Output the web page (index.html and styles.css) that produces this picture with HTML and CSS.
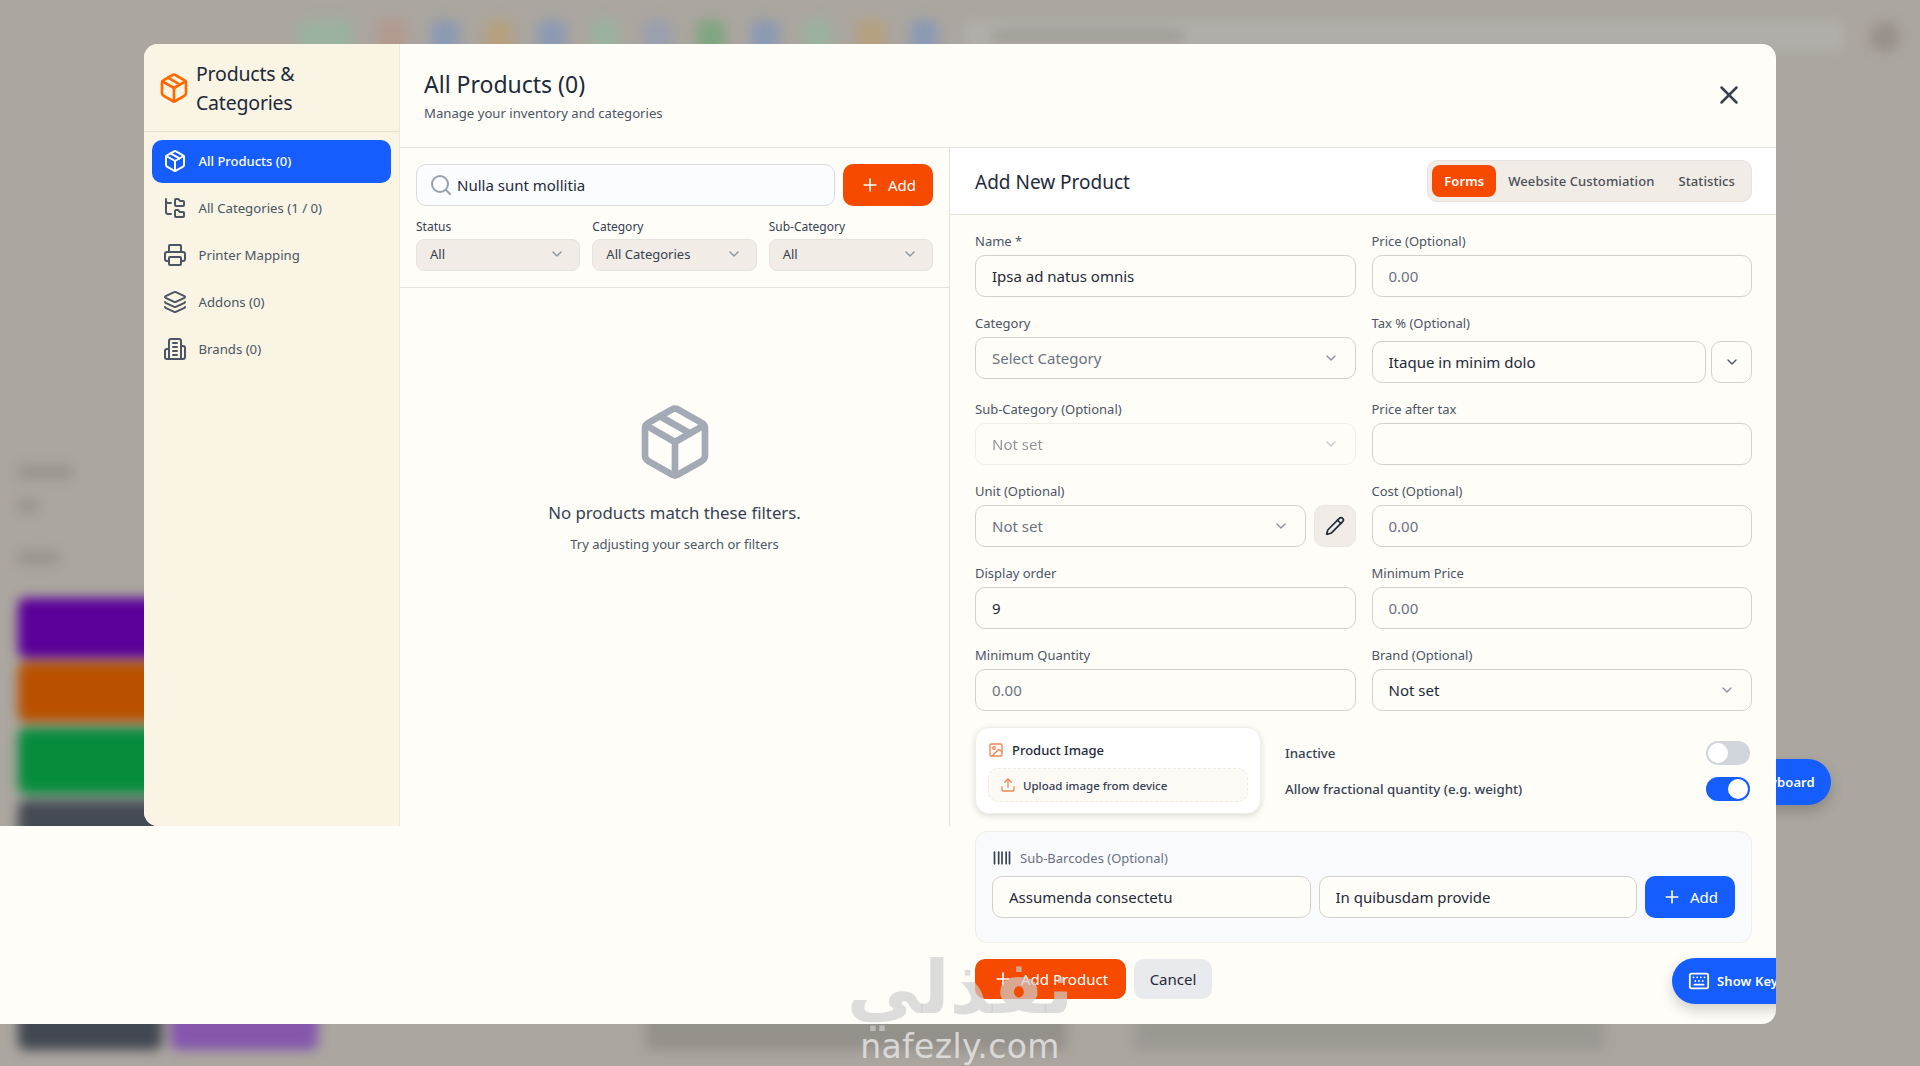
FILE: index.html
```html
<!DOCTYPE html>
<html lang="en">

<head>
    <meta charset="UTF-8">
    <meta name="viewport" content="width=device-width, initial-scale=1.0">
    <title>Products &amp; Categories</title>
    <link rel="stylesheet" href="styles.css">
</head>

<body>
    <svg class="sprite" aria-hidden="true">
        <symbol id="i-package" viewBox="0 0 24 24"><path d="M11 21.73a2 2 0 0 0 2 0l7-4a2 2 0 0 0 1-1.73V8a2 2 0 0 0-1-1.73l-7-4a2 2 0 0 0-2 0l-7 4A2 2 0 0 0 3 8v8a2 2 0 0 0 1 1.73z"/><path d="M12 22V12"/><path d="m3.3 7 8.7 5 8.7-5"/><path d="m7.5 4.27 9 5.15"/></symbol>
        <symbol id="i-tree" viewBox="0 0 24 24"><path d="M20 10a1 1 0 0 0 1-1V6a1 1 0 0 0-1-1h-2.5a1 1 0 0 1-.8-.4l-.9-1.2A1 1 0 0 0 15 3h-2a1 1 0 0 0-1 1v5a1 1 0 0 0 1 1Z"/><path d="M20 21a1 1 0 0 0 1-1v-3a1 1 0 0 0-1-1h-2.9a1 1 0 0 1-.88-.55l-.42-.85a1 1 0 0 0-.92-.6H13a1 1 0 0 0-1 1v5a1 1 0 0 0 1 1Z"/><path d="M3 5a2 2 0 0 0 2 2h3"/><path d="M3 3v13a2 2 0 0 0 2 2h3"/></symbol>
        <symbol id="i-printer" viewBox="0 0 24 24"><path d="M6 18H4a2 2 0 0 1-2-2v-5a2 2 0 0 1 2-2h16a2 2 0 0 1 2 2v5a2 2 0 0 1-2 2h-2"/><path d="M6 9V3a1 1 0 0 1 1-1h10a1 1 0 0 1 1 1v6"/><rect x="6" y="14" width="12" height="8" rx="1"/></symbol>
        <symbol id="i-layers" viewBox="0 0 24 24"><path d="M12.83 2.18a2 2 0 0 0-1.66 0L2.6 6.08a1 1 0 0 0 0 1.83l8.58 3.91a2 2 0 0 0 1.66 0l8.58-3.9a1 1 0 0 0 0-1.83z"/><path d="M2 12a1 1 0 0 0 .58.91l8.6 3.91a2 2 0 0 0 1.65 0l8.58-3.9A1 1 0 0 0 22 12"/><path d="M2 17a1 1 0 0 0 .58.91l8.6 3.91a2 2 0 0 0 1.65 0l8.58-3.9A1 1 0 0 0 22 17"/></symbol>
        <symbol id="i-building" viewBox="0 0 24 24"><path d="M6 22V4a2 2 0 0 1 2-2h8a2 2 0 0 1 2 2v18Z"/><path d="M6 12H4a2 2 0 0 0-2 2v6a2 2 0 0 0 2 2h2"/><path d="M18 9h2a2 2 0 0 1 2 2v9a2 2 0 0 1-2 2h-2"/><path d="M10 6h4"/><path d="M10 10h4"/><path d="M10 14h4"/><path d="M10 18h4"/></symbol>
        <symbol id="i-search" viewBox="0 0 24 24"><circle cx="11" cy="11" r="8"/><path d="m21 21-4.3-4.3"/></symbol>
        <symbol id="i-plus" viewBox="0 0 24 24"><path d="M5 12h14"/><path d="M12 5v14"/></symbol>
        <symbol id="i-x" viewBox="0 0 24 24"><path d="M18 6 6 18"/><path d="m6 6 12 12"/></symbol>
        <symbol id="i-chevron" viewBox="0 0 24 24"><path d="m6 9 6 6 6-6"/></symbol>
        <symbol id="i-pencil" viewBox="0 0 24 24"><path d="M21.174 6.812a1 1 0 0 0-3.986-3.987L3.842 16.174a2 2 0 0 0-.5.83l-1.321 4.352a.5.5 0 0 0 .623.622l4.353-1.32a2 2 0 0 0 .83-.497z"/><path d="m15 5 4 4"/></symbol>
        <symbol id="i-image" viewBox="0 0 24 24"><rect x="3" y="3" width="18" height="18" rx="2"/><circle cx="9" cy="9" r="2"/><path d="m21 15-3.086-3.086a2 2 0 0 0-2.828 0L6 21"/></symbol>
        <symbol id="i-upload" viewBox="0 0 24 24"><path d="M12 3v12"/><path d="m17 8-5-5-5 5"/><path d="M21 15v4a2 2 0 0 1-2 2H5a2 2 0 0 1-2-2v-4"/></symbol>
        <symbol id="i-barcode" viewBox="0 0 24 24"><path d="M3 5v14"/><path d="M8 5v14"/><path d="M12 5v14"/><path d="M17 5v14"/><path d="M21 5v14"/></symbol>
        <symbol id="i-keyboard" viewBox="0 0 24 24"><path d="M10 8h.01"/><path d="M12 12h.01"/><path d="M14 8h.01"/><path d="M16 12h.01"/><path d="M18 8h.01"/><path d="M6 8h.01"/><path d="M7 16h10"/><path d="M8 12h.01"/><rect width="20" height="16" x="2" y="4" rx="2"/></symbol>
    </svg>

    <!-- blurred page behind the dialog -->
    <div class="backdrop">
        <div class="bg_topbar">
            <span class="chip chip_green wide"></span>
            <span class="chip chip_rose"></span>
            <span class="chip chip_blue"></span>
            <span class="chip chip_amber"></span>
            <span class="chip chip_blue"></span>
            <span class="chip chip_green"></span>
            <span class="chip chip_slate"></span>
            <span class="chip chip_leaf"></span>
            <span class="chip chip_blue"></span>
            <span class="chip chip_green"></span>
            <span class="chip chip_amber"></span>
            <span class="chip chip_blue"></span>
            <span class="bg_search"><span class="bg_search_text"></span></span>
            <span class="bg_avatar"></span>
        </div>
        <div class="bg_side">
            <span class="bg_line w50"></span>
            <span class="bg_line w20"></span>
            <span class="bg_line w40"></span>
            <span class="bg_block purple"></span>
            <span class="bg_block orange"></span>
            <span class="bg_block green"></span>
            <span class="bg_block dark"></span>
        </div>
        <div class="bg_bottom">
            <span class="bg_foot dark_foot"></span>
            <span class="bg_foot violet_foot"></span>
            <span class="bg_foot mid_foot"></span>
            <span class="bg_foot far_foot"></span>
        </div>
    </div>

    <button class="kbd_btn back_kbd">
        <svg class="icon i22"><use href="#i-keyboard"/></svg>
        Show Keyboard
    </button>

    <!-- lower part of the dialog, it runs out to the left edge -->
    <div class="spill">
        <button class="kbd_btn front_kbd">
            <svg class="icon i22"><use href="#i-keyboard"/></svg>
            Show Keyboard
        </button>
    </div>

    <div class="modal">
        <aside class="sidebar">
            <div class="side_head">
                <svg class="icon i32 orange_icon"><use href="#i-package"/></svg>
                <h2>Products &amp; Categories</h2>
            </div>
            <nav class="side_nav">
                <a class="nav_item active"><svg class="icon i24"><use href="#i-package"/></svg>All Products (0)</a>
                <a class="nav_item"><svg class="icon i24"><use href="#i-tree"/></svg>All Categories (1 / 0)</a>
                <a class="nav_item"><svg class="icon i24"><use href="#i-printer"/></svg>Printer Mapping</a>
                <a class="nav_item"><svg class="icon i24"><use href="#i-layers"/></svg>Addons (0)</a>
                <a class="nav_item"><svg class="icon i24"><use href="#i-building"/></svg>Brands (0)</a>
            </nav>
        </aside>

        <main class="main">
            <header class="main_head">
                <div>
                    <h1>All Products (0)</h1>
                    <p>Manage your inventory and categories</p>
                </div>
                <svg class="icon i30 close"><use href="#i-x"/></svg>
            </header>

            <div class="main_body">
                <section class="list_pane">
                    <div class="list_tools">
                        <div class="search_row">
                            <div class="search">
                                <svg class="icon i24"><use href="#i-search"/></svg>
                                <span>Nulla sunt mollitia</span>
                            </div>
                            <button class="btn btn_orange add_small"><svg class="icon i20"><use href="#i-plus"/></svg>Add</button>
                        </div>
                        <div class="filters">
                            <div class="filter">
                                <label>Status</label>
                                <div class="filter_select"><span>All</span><svg class="icon i16"><use href="#i-chevron"/></svg></div>
                            </div>
                            <div class="filter">
                                <label>Category</label>
                                <div class="filter_select"><span>All Categories</span><svg class="icon i16"><use href="#i-chevron"/></svg></div>
                            </div>
                            <div class="filter">
                                <label>Sub-Category</label>
                                <div class="filter_select"><span>All</span><svg class="icon i16"><use href="#i-chevron"/></svg></div>
                            </div>
                        </div>
                    </div>
                    <div class="empty">
                        <svg class="icon empty_icon"><use href="#i-package"/></svg>
                        <p class="empty_title">No products match these filters.</p>
                        <p class="empty_sub">Try adjusting your search or filters</p>
                    </div>
                </section>

                <section class="form_pane">
                    <div class="form_head">
                        <h3>Add New Product</h3>
                        <div class="tabs">
                            <span class="tab active">Forms</span>
                            <span class="tab">Weebsite Customiation</span>
                            <span class="tab">Statistics</span>
                        </div>
                    </div>

                    <form class="form">
                        <div class="form_grid">
                            <div class="field">
                                <label>Name *</label>
                                <input class="input" value="Ipsa ad natus omnis">
                            </div>
                            <div class="field">
                                <label>Price (Optional)</label>
                                <input class="input" placeholder="0.00">
                            </div>
                            <div class="field">
                                <label>Category</label>
                                <div class="input select placeholder"><span>Select Category</span><svg class="icon i16"><use href="#i-chevron"/></svg></div>
                            </div>
                            <div class="field">
                                <label>Tax % (Optional)</label>
                                <div class="input_row tax_row">
                                    <input class="input" value="Itaque in minim dolo">
                                    <button type="button" class="side_btn"><svg class="icon i16"><use href="#i-chevron"/></svg></button>
                                </div>
                            </div>
                            <div class="field">
                                <label>Sub-Category (Optional)</label>
                                <div class="input select disabled"><span>Not set</span><svg class="icon i16"><use href="#i-chevron"/></svg></div>
                            </div>
                            <div class="field">
                                <label>Price after tax</label>
                                <input class="input">
                            </div>
                            <div class="field">
                                <label>Unit (Optional)</label>
                                <div class="input_row">
                                    <div class="input select placeholder"><span>Not set</span><svg class="icon i16"><use href="#i-chevron"/></svg></div>
                                    <button type="button" class="side_btn edit_btn"><svg class="icon i20"><use href="#i-pencil"/></svg></button>
                                </div>
                            </div>
                            <div class="field">
                                <label>Cost (Optional)</label>
                                <input class="input" placeholder="0.00">
                            </div>
                            <div class="field">
                                <label>Display order</label>
                                <input class="input" value="9">
                            </div>
                            <div class="field">
                                <label>Minimum Price</label>
                                <input class="input" placeholder="0.00">
                            </div>
                            <div class="field">
                                <label>Minimum Quantity</label>
                                <input class="input" placeholder="0.00">
                            </div>
                            <div class="field">
                                <label>Brand (Optional)</label>
                                <div class="input select"><span>Not set</span><svg class="icon i16"><use href="#i-chevron"/></svg></div>
                            </div>
                        </div>

                        <div class="media_row">
                            <div class="image_card">
                                <div class="image_title"><svg class="icon i16 orange_soft"><use href="#i-image"/></svg>Product Image</div>
                                <div class="upload"><svg class="icon i16 orange_soft"><use href="#i-upload"/></svg>Upload image from device</div>
                            </div>
                            <div class="switches">
                                <div class="switch_row">
                                    <span>Inactive</span>
                                    <span class="switch"></span>
                                </div>
                                <div class="switch_row">
                                    <span>Allow fractional quantity (e.g. weight)</span>
                                    <span class="switch on"></span>
                                </div>
                            </div>
                        </div>

                        <div class="barcodes">
                            <div class="barcodes_title"><svg class="icon i20 barcode_icon"><use href="#i-barcode"/></svg>Sub-Barcodes (Optional)</div>
                            <div class="barcodes_row">
                                <input class="input" value="Assumenda consectetu">
                                <input class="input" value="In quibusdam provide">
                                <button type="button" class="btn btn_blue add_small"><svg class="icon i20"><use href="#i-plus"/></svg>Add</button>
                            </div>
                        </div>

                        <div class="form_foot">
                            <button type="button" class="btn btn_orange add_product"><svg class="icon i20"><use href="#i-plus"/></svg>Add Product</button>
                            <button type="button" class="btn btn_gray">Cancel</button>
                        </div>
                    </form>
                </section>
            </div>
        </main>
    </div>

    <div class="watermark">
        <span class="mark_ar" lang="ar" dir="rtl">نفذلي</span>
        <span class="mark_en">nafezly.com</span>
    </div>
</body>

</html>
```

FILE: styles.css
```css
* {
    box-sizing: border-box;
}

html,
body {
    margin: 0;
    height: 100%;
}

body {
    position: relative;
    width: 1920px;
    height: 1066px;
    overflow: hidden;
    background: #aba69f;
    color: #1e2939;
    font-family: "Noto Sans", "Liberation Sans", sans-serif;
}

h1,
h2,
h3,
p {
    margin: 0;
    font-weight: 400;
}

button,
input {
    font: inherit;
}

.sprite {
    display: none;
}

.icon {
    flex: none;
    fill: none;
    stroke: currentColor;
    stroke-width: 2;
    stroke-linecap: round;
    stroke-linejoin: round;
}

.i16 {
    width: 16px;
    height: 16px;
}

.i20 {
    width: 20px;
    height: 20px;
}

.i22 {
    width: 22px;
    height: 22px;
}

.i24 {
    width: 24px;
    height: 24px;
}

.i30 {
    width: 30px;
    height: 30px;
}

.i32 {
    width: 32px;
    height: 32px;
}

/* blurred page */
.backdrop {
    position: absolute;
    inset: 0;
    display: flex;
    flex-direction: column;
    filter: blur(6px);
}

.bg_topbar {
    display: flex;
    gap: 25.2px;
    height: 60px;
    padding: 20px 20px 0 299px;
}

.chip {
    width: 28px;
    height: 40px;
    border-radius: 6px;
}

.chip.wide {
    width: 54px;
}

.chip_green {
    background: #9ab29f;
}

.chip_rose {
    background: #b3998f;
}

.chip_blue {
    background: #8c9ab3;
}

.chip_amber {
    background: #b5a07e;
}

.chip_slate {
    background: #9a9fae;
}

.chip_leaf {
    background: #80a581;
}

.bg_search {
    flex: 1;
    height: 32px;
    padding: 10px 30px;
    background: #b0aea8;
    border-radius: 8px;
}

.bg_search_text {
    display: block;
    width: 190px;
    height: 12px;
    background: #9f9b95;
}

.bg_avatar {
    width: 30px;
    height: 30px;
    margin-top: 2px;
    background: #96918a;
    border-radius: 50%;
}

.bg_side {
    display: flex;
    flex-direction: column;
    width: 160px;
    padding: 406px 0 0 18px;
}

.bg_line {
    height: 12px;
    background: #96928b;
}

.w50 {
    width: 54px;
    margin-bottom: 22px;
}

.w20 {
    width: 20px;
    margin-bottom: 40px;
}

.w40 {
    width: 40px;
}

.bg_block {
    width: 200px;
    border-radius: 8px;
}

.bg_block.purple {
    height: 60px;
    margin-top: 34px;
    background: #5b0099;
}

.bg_block.orange {
    height: 60px;
    margin-top: 4px;
    background: #b85000;
}

.bg_block.green {
    height: 66px;
    margin-top: 6px;
    background: #058c3a;
}

.bg_block.dark {
    height: 60px;
    margin-top: 6px;
    background: #454b55;
}

.bg_bottom {
    display: flex;
    gap: 8px;
    margin-top: auto;
    padding: 0 0 16px 18px;
}

.bg_foot {
    height: 70px;
}

.dark_foot {
    width: 144px;
    background: #424852;
    border-radius: 8px;
}

.violet_foot {
    width: 148px;
    background: #8457ad;
    border-radius: 8px;
}

.mid_foot {
    width: 420px;
    margin-left: 320px;
    background: #94908a;
}

.far_foot {
    width: 470px;
    margin-left: 60px;
    background: #9b9892;
}

/* floating keyboard button */
.kbd_btn {
    position: absolute;
    display: flex;
    align-items: center;
    gap: 7px;
    width: 160px;
    height: 46px;
    padding: 0 0 0 16px;
    border: 0;
    border-radius: 23px;
    background: #155dfc;
    color: #fff;
    font-size: 13px;
    font-weight: 600;
    letter-spacing: .1px;
    white-space: nowrap;
    box-shadow: 0 6px 14px rgba(0, 0, 0, .18);
}

.back_kbd {
    left: 1671px;
    top: 759px;
}

.front_kbd {
    left: 1672px;
    top: 132px;
}

.spill {
    position: absolute;
    left: 0;
    top: 826px;
    width: 1776px;
    height: 198px;
    overflow: hidden;
    background: #fffdf8;
    border-radius: 0 0 14px 0;
}

/* dialog */
.modal {
    position: absolute;
    left: 144px;
    top: 44px;
    display: flex;
    width: 1632px;
    height: 782px;
    background: #fffdf8;
    border-radius: 14px 14px 0 14px;
}

.sidebar {
    width: 256px;
    flex: none;
    background: #f9f4e4;
    border-right: 1px solid #efe9da;
    border-radius: 14px 0 0 14px;
}

.side_head {
    display: flex;
    align-items: center;
    gap: 6px;
    height: 88px;
    padding: 0 16px 0 14px;
    border-bottom: 1px solid #e6e0d1;
}

.side_head h2 {
    font-size: 19.5px;
    line-height: 29px;
    letter-spacing: -.2px;
}

.orange_icon {
    color: #ff6900;
}

.side_nav {
    display: flex;
    flex-direction: column;
    gap: 4px;
    padding: 8px;
}

.nav_item {
    display: flex;
    align-items: center;
    gap: 11.5px;
    height: 42.8px;
    padding: 0 11px;
    border-radius: 10px;
    color: #4a5565;
    font-size: 13.2px;
}

.nav_item.active {
    background: #155dfc;
    color: #fff;
    font-size: 13px;
    font-weight: 500;
}

.main {
    display: flex;
    flex: 1;
    flex-direction: column;
    min-width: 0;
}

.main_head {
    display: flex;
    align-items: center;
    justify-content: space-between;
    flex: none;
    height: 104px;
    padding: 0 32px 0 24px;
    border-bottom: 1px solid #e5e3df;
}

.main_head h1 {
    font-size: 23px;
    line-height: 32px;
}

.main_head p {
    margin-top: 3px;
    color: #4a5565;
    font-size: 13.15px;
    line-height: 20px;
}

.close {
    margin-bottom: 2px;
    color: #374151;
}

.main_body {
    display: flex;
    flex: 1;
    min-height: 0;
}

.list_pane {
    width: 550px;
    flex: none;
    border-right: 1px solid #e5e3df;
}

.list_tools {
    padding: 16px;
    border-bottom: 1px solid #e5e3df;
}

.search_row {
    display: flex;
    gap: 8px;
}

.search {
    display: flex;
    align-items: center;
    gap: 4px;
    flex: 1;
    height: 42px;
    padding: 0 12px;
    background: #fbfcfd;
    border: 1px solid #d8dbe0;
    border-radius: 10px;
    font-size: 15px;
}

.search .icon {
    color: #99a1af;
}

.btn {
    display: flex;
    align-items: center;
    justify-content: center;
    gap: 8px;
    height: 42px;
    padding: 0;
    border: 0;
    border-radius: 10px;
    font-size: 15px;
}

.btn_orange {
    background: #f54a00;
    color: #fff;
}

.btn_blue {
    background: #155dfc;
    color: #fff;
}

.btn_gray {
    width: 78px;
    background: #e9eaed;
    color: #1e2939;
}

.add_small {
    flex: none;
    width: 90px;
}

.filters {
    display: grid;
    grid-template-columns: repeat(3, 1fr);
    gap: 12px;
    margin-top: 13px;
}

.filter label {
    display: block;
    height: 16px;
    margin-bottom: 4px;
    color: #364153;
    font-size: 12px;
    line-height: 16px;
}

.filter_select {
    display: flex;
    align-items: center;
    justify-content: space-between;
    height: 32px;
    padding: 0 14px 2px 13px;
    background: #f1ece5;
    border: 1px solid #e6e3de;
    border-radius: 8px;
    color: #364153;
    font-size: 13px;
}

.filter_select .icon {
    color: #8a919d;
}

.empty {
    display: flex;
    flex-direction: column;
    align-items: center;
    padding-top: 114px;
}

.empty_icon {
    width: 80px;
    height: 80px;
    color: #a3aab6;
}

.empty_title {
    margin-top: 19px;
    color: #364153;
    font-size: 16.8px;
    line-height: 24px;
}

.empty_sub {
    margin-top: 10px;
    color: #4a5565;
    font-size: 13px;
    line-height: 18px;
}

.form_pane {
    flex: 1;
    min-width: 0;
}

.form_head {
    display: flex;
    align-items: center;
    justify-content: space-between;
    height: 67px;
    padding: 0 24px 0 25px;
    background: #fff;
    border-bottom: 1px solid #e5e3df;
}

.form_head h3 {
    padding-top: 2px;
    font-size: 19px;
}

.tabs {
    display: flex;
    align-items: center;
    height: 42px;
    padding: 0 4px;
    background: #f1ece5;
    border: 1px solid #e6e3de;
    border-radius: 10px;
}

.tab {
    display: flex;
    align-items: center;
    height: 32px;
    padding: 0 12px;
    border-radius: 8px;
    color: #4a4f58;
    font-size: 13px;
    font-weight: 500;
    letter-spacing: .1px;
}

.tab.active {
    background: #f54a00;
    color: #fff;
    font-weight: 600;
}

.form {
    padding: 16px 24px 16px 25px;
}

.form_grid {
    display: grid;
    grid-template-columns: 1fr 1fr;
    gap: 16px;
}

.field label {
    display: block;
    height: 20px;
    margin-bottom: 4px;
    color: #4a5565;
    font-size: 13px;
    line-height: 20px;
}

.input {
    display: block;
    width: 100%;
    min-width: 0;
    height: 42px;
    padding: 0 16px;
    background: transparent;
    border: 1px solid #d3d1cc;
    border-radius: 10px;
    color: #1e2939;
    font-size: 15px;
    outline: 0;
}

.input::placeholder {
    color: #6a7282;
    opacity: 1;
}

.select {
    display: flex;
    align-items: center;
    justify-content: space-between;
    padding-right: 16px;
}

.select .icon {
    color: #8a919d;
}

.placeholder span {
    color: #6a7282;
}

.disabled {
    opacity: .5;
    border-color: #e3e1dc;
}

.input_row {
    display: flex;
    gap: 8px;
}

.input_row .input {
    flex: 1;
}

.tax_row {
    gap: 5px;
    margin-top: 8px;
}

.side_btn {
    display: flex;
    align-items: center;
    justify-content: center;
    flex: none;
    width: 41px;
    height: 42px;
    padding: 0;
    background: transparent;
    border: 1px solid #d3d1cc;
    border-radius: 10px;
    color: #4a5565;
}

.edit_btn {
    width: 42px;
    background: #f1ece5;
    border-color: #ebe7e0;
    color: #1e2939;
}

.media_row {
    display: flex;
    align-items: center;
    gap: 24px;
    margin-top: 16px;
}

.image_card {
    flex: none;
    width: 286px;
    height: 87px;
    padding: 10px 12px;
    background: #fff;
    border: 1px solid #f1efea;
    border-radius: 14px;
    box-shadow: 0 2px 6px rgba(0, 0, 0, .14);
}

.image_title {
    display: flex;
    align-items: center;
    gap: 8px;
    height: 24px;
    color: #1e2939;
    font-size: 13px;
    font-weight: 500;
}

.orange_soft {
    color: #f0864f;
}

.upload {
    display: flex;
    align-items: center;
    gap: 7px;
    height: 34px;
    margin-top: 6px;
    padding: 0 11px;
    background: #fdfaf5;
    border: 1px dashed #eeebe5;
    border-radius: 10px;
    color: #364153;
    font-size: 11.5px;
    font-weight: 500;
}

.switches {
    display: flex;
    flex: 1;
    flex-direction: column;
    gap: 12px;
    padding-right: 2px;
}

.switch_row {
    display: flex;
    align-items: center;
    justify-content: space-between;
    color: #364153;
    font-size: 13.3px;
    font-weight: 500;
}

.switch {
    position: relative;
    width: 44px;
    height: 24px;
    background: #d1d5dc;
    border-radius: 12px;
}

.switch::after {
    content: "";
    position: absolute;
    left: 2px;
    top: 2px;
    width: 20px;
    height: 20px;
    background: #fff;
    border-radius: 50%;
}

.switch.on {
    background: #155dfc;
}

.switch.on::after {
    left: 22px;
}

.barcodes {
    margin-top: 17px;
    padding: 16px 16px 24px;
    background: #f8fafc;
    border: 1px solid #eeeeea;
    border-radius: 12px;
}

.barcodes_title {
    display: flex;
    align-items: center;
    gap: 8px;
    height: 20px;
    color: #6a7282;
    font-size: 13px;
}

.barcode_icon {
    color: #364153;
}

.barcodes_row {
    display: flex;
    gap: 8px;
    margin-top: 8px;
}

.barcodes_row .input {
    flex: 1;
    background: #fffdf8;
}

.form_foot {
    display: flex;
    gap: 8px;
    margin-top: 16px;
}

.form_foot .btn {
    height: 40px;
}

.add_product {
    width: 151px;
}

/* site watermark over everything */
.watermark {
    position: absolute;
    left: 850px;
    top: 946px;
    display: flex;
    flex-direction: column;
    align-items: center;
    width: 220px;
    pointer-events: none;
}

.mark_ar {
    color: rgba(205, 205, 205, .7);
    font-family: "DejaVu Sans", sans-serif;
    font-size: 74px;
    font-weight: 700;
    line-height: 82px;
}

.mark_en {
    color: rgba(228, 228, 228, .85);
    font-family: "DejaVu Sans", sans-serif;
    font-size: 33px;
    letter-spacing: .4px;
    line-height: 38px;
}
```
